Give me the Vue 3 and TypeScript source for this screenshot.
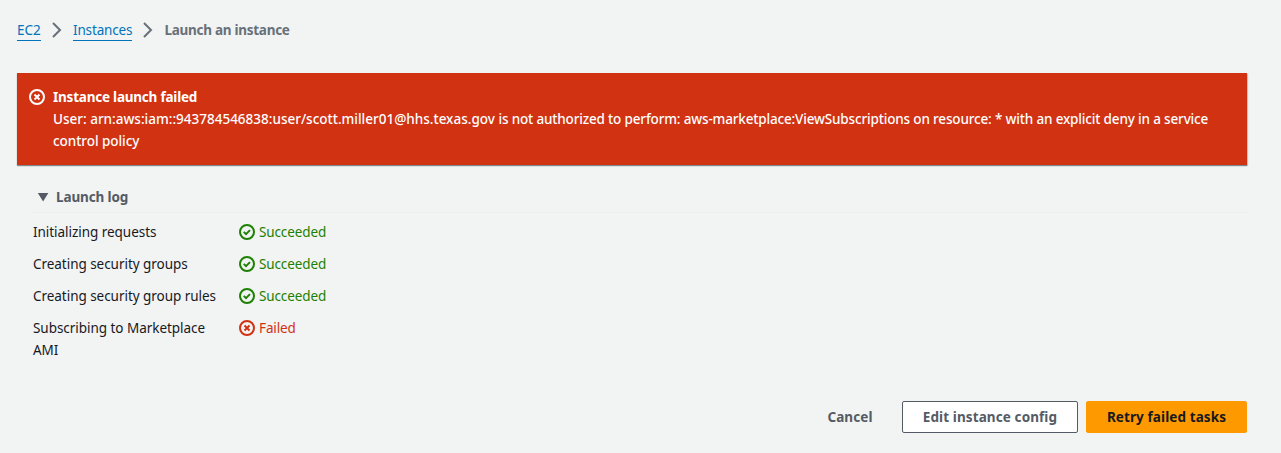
<script setup lang="ts">
interface Task {
  name: string
  ok: boolean
}

const tasks: Task[] = [
  { name: 'Initializing requests', ok: true },
  { name: 'Creating security groups', ok: true },
  { name: 'Creating security group rules', ok: true },
  { name: 'Subscribing to Marketplace AMI', ok: false },
]
</script>

<template>
  <main class="page">
    <nav class="crumbs">
      <a class="link ec2">EC2</a>
      <svg class="chevron" viewBox="0 0 16 16"><path d="M4 1l7 7-7 7" /></svg>
      <a class="link instances">Instances</a>
      <svg class="chevron" viewBox="0 0 16 16"><path d="M4 1l7 7-7 7" /></svg>
      <span class="current">Launch an instance</span>
    </nav>

    <section class="alert">
      <svg class="icon" viewBox="0 0 16 16">
        <circle cx="8" cy="8" r="7" />
        <path d="M10.5 5.5l-5 5M10.5 10.5l-5-5" />
      </svg>
      <div class="message">
        <div class="title">Instance launch failed</div>
        <div class="line"><span class="arn">User: arn:aws:iam::943784546838:user/scott.miller01@hhs.texas.gov </span>is not authorized to perform: aws-marketplace:ViewSubscriptions on resource: * with an explicit deny in a service</div>
        <div class="line last">control policy</div>
      </div>
    </section>

    <section class="log">
      <header class="log-head">
        <svg class="caret" viewBox="0 0 16 16"><path d="M2.8 4h10.6L8.1 12.4z" /></svg>
        <span class="log-title">Launch log</span>
      </header>
      <div v-for="task in tasks" :key="task.name" class="task">
        <div class="name">{{ task.name }}</div>
        <div class="status" :class="task.ok ? 'ok' : 'bad'">
          <svg class="icon" viewBox="0 0 16 16">
            <circle cx="8" cy="8" r="7" />
            <path v-if="task.ok" d="M4.8 7.9l2.2 2.2 4-4" />
            <path v-else d="M10.5 5.5l-5 5M10.5 10.5l-5-5" />
          </svg>
          <span>{{ task.ok ? 'Succeeded' : 'Failed' }}</span>
        </div>
      </div>
    </section>

    <footer class="actions">
      <button class="btn plain">Cancel</button>
      <button class="btn normal">Edit instance config</button>
      <button class="btn primary">Retry failed tasks</button>
    </footer>
  </main>
</template>

<style>
body {
  margin: 0;
  background: #f2f3f3;
}
</style>

<style scoped>
.page {
  box-sizing: border-box;
  height: 453px;
  padding: 19px 34px 0 17px;
  overflow: hidden;
  background: #f2f3f3;
  color: #16191f;
  font-family: "Noto Sans", "Open Sans", sans-serif;
  font-size: 13.5px;
  line-height: 22px;
}
svg {
  flex: none;
  width: 16px;
  height: 16px;
  fill: none;
  stroke: currentColor;
  stroke-width: 2;
}
.crumbs {
  display: flex;
  height: 22px;
  align-items: center;
  white-space: nowrap;
}
.link {
  box-sizing: border-box;
  height: 21px;
  line-height: 21px;
  color: #0073bb;
  border-bottom: 1px solid #0073bb;
}
.ec2 {
  width: 24px;
}
.instances {
  width: 59px;
  letter-spacing: -0.15px;
}
.chevron {
  margin: 0 8px;
  color: #687078;
}
.current {
  margin-left: 0.5px;
  color: #687078;
  font-weight: 700;
  letter-spacing: -0.28px;
}
.alert {
  display: flex;
  box-sizing: border-box;
  height: 92px;
  margin-top: 32px;
  padding: 13px 0 0 12px;
  background: #d13212;
  color: #fff;
  box-shadow: 0 1px 1px rgba(0, 28, 36, 0.4), 1px 1px 1px rgba(0, 28, 36, 0.15);
}
.alert .icon {
  margin: 3px 8px 0 0;
}
.message {
  white-space: nowrap;
}
.title {
  font-weight: 700;
  letter-spacing: -0.22px;
}
.line {
  font-weight: 500;
  letter-spacing: -0.16px;
}
.arn {
  letter-spacing: 0;
}
.last {
  letter-spacing: -0.05px;
}
.log {
  padding-left: 16px;
}
.log-head {
  display: flex;
  box-sizing: border-box;
  height: 48px;
  padding: 21px 0 4px 2px;
  align-items: center;
  border-bottom: 1px solid #eaeded;
  color: #545b64;
}
.caret {
  fill: currentColor;
  stroke: none;
}
.log-title {
  margin-left: 5px;
  font-weight: 700;
  letter-spacing: -0.12px;
}
.task {
  display: flex;
  margin-top: 10px;
  align-items: flex-start;
}
.log-head + .task {
  margin-top: 8px;
}
.name {
  width: 190px;
  margin-right: 16px;
  letter-spacing: -0.04px;
}
.status {
  display: flex;
  align-items: center;
  gap: 4px;
  letter-spacing: -0.12px;
}
.ok {
  color: #1d8102;
}
.bad {
  color: #d13212;
}
.actions {
  display: flex;
  margin-top: 40px;
  justify-content: flex-end;
}
.btn {
  box-sizing: border-box;
  height: 32px;
  padding: 0;
  border: 1px solid transparent;
  border-radius: 2px;
  font: inherit;
  font-weight: 700;
  line-height: 22px;
  letter-spacing: 0.1px;
  white-space: nowrap;
}
.plain {
  width: 88px;
  margin-right: 8px;
  background: transparent;
  color: #545b64;
}
.normal {
  width: 176px;
  margin-right: 8px;
  border-color: #545b64;
  background: #fff;
  color: #545b64;
}
.primary {
  width: 161px;
  border-color: #ff9900;
  background: #ff9900;
  color: #16191f;
}
</style>
